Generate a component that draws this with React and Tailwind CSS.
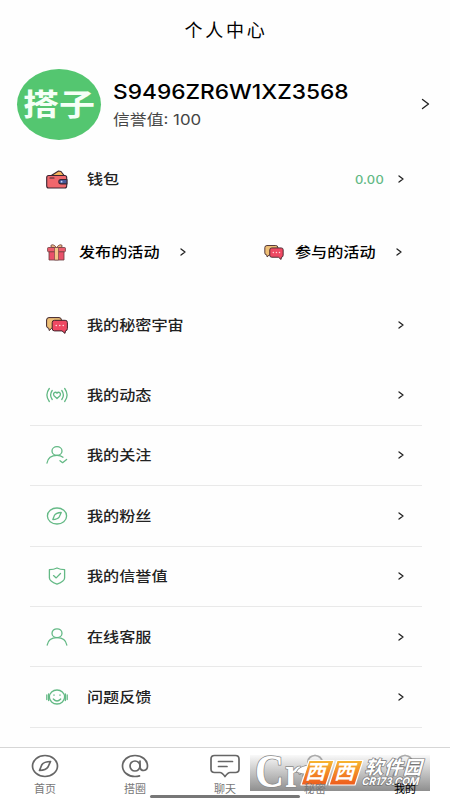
import { clsx } from "clsx";

const green = "#63b985";

function Chevron({ className, width = 1.3 }) {
  return (
    <svg className={className} viewBox="0 0 6 8" fill="none" stroke="#222" strokeWidth={width} strokeLinecap="round" strokeLinejoin="round">
      <path d="M1 1l4 3-4 3" />
    </svg>
  );
}

function WalletIcon() {
  return (
    <svg width="22" height="19" viewBox="0 0 22 19" stroke="#3b2430" strokeWidth="1.1" strokeLinejoin="round">
      <path d="M4.500 6L12.500 1l2.500.5 3.500 4.500z" fill="#f6b35c" />
      <rect x="0.700" y="5.500" width="20" height="12.500" rx="2" fill="#f0676c" />
      <path d="M4 8h4" strokeLinecap="round" />
      <path d="M21 9.500h-6a2.200 2.200 0 000 4.400h6z" fill="#475a9c" />
      <circle cx="15.600" cy="11.700" r="0.900" fill="#cdd7f4" stroke="none" />
    </svg>
  );
}

function GiftIcon() {
  return (
    <svg width="19" height="17" viewBox="0 0 19 17" stroke="#6b3a3c" strokeWidth="0.800" strokeLinejoin="round">
      <path d="M9.500 4C8 .5 4-.2 3.800 2c0 1.500 2.500 2 5.700 2zM9.500 4c1.500-3.500 5.500-4.200 5.700-2 0 1.500-2.500 2-5.700 2z" fill="#e8b884" />
      <path d="M2 7.500h15V16H2z" fill="#e9516a" />
      <rect x="0.600" y="3.500" width="17.800" height="4.300" rx="0.800" fill="#ee5d6e" />
      <path d="M7.500 3.500h4V16h-4z" fill="#f4c789" strokeWidth="0.600" />
    </svg>
  );
}

function ChatsIcon({ className }) {
  return (
    <svg className={className} viewBox="0 0 22 17" stroke="#3d2229" strokeWidth="1" strokeLinejoin="round">
      <path d="M3 .6h10q2.400 0 2.400 2.400v6q0 2.400-2.400 2.400H5.500L3.200 13.500l-.4-2.200Q.6 11 .6 9V3Q.6.600 3 .600z" fill="#eebf76" />
      <path d="M8.500 3.300h10.700q2.200 0 2.200 2.200v6q0 2.200-1.900 2.300l-.5 2.600-3-2.500H8.500q-2.300 0-2.300-2.300V5.600q0-2.300 2.300-2.300z" fill="#ee4963" />
      <path d="M10.200 8.500h.1M13.700 8.500h.1M17.200 8.500h.1" stroke="#ffd5d8" strokeWidth="1.600" strokeLinecap="round" />
    </svg>
  );
}

const shapes = {
  live: (
    <>
      <path d="M3.300 2.500q-4.800 6.500 0 13M6.200 4.500q-3.200 4.500 0 9M18.700 2.500q4.800 6.500 0 13M15.800 4.500q3.200 4.500 0 9" />
      <path d="M11 12.500L8 9.800Q6.800 7.200 8.800 6.300q1.500-.3 2.200.9.700-1.200 2.200-.9 2 .9.800 3.500z" />
    </>
  ),
  follow: (
    <>
      <ellipse cx="11" cy="5" rx="5" ry="4.300" />
      <path d="M1 17c.8-4.800 4.300-7.600 10-7.600 2.500 0 4.500.6 6 1.800M14 14.700l2.600 2 4-3.300" />
    </>
  ),
  compass: (
    <>
      <ellipse cx="11" cy="9" rx="9.600" ry="8" />
      <path d="M15.300 5.500q-5.500.3-6.800 2.800l-1.700 4.200q5-.3 6.500-2.700z" />
    </>
  ),
  shield: (
    <>
      <path d="M11 1c2.300 1.100 4.500 1.600 7.600 1.700v8.300c0 3-3.600 4.700-7.600 6.200-4-1.500-7.600-3.200-7.600-6.200V2.700C6.500 2.600 8.700 2.100 11 1z" />
      <path d="M7.500 8.600l2.700 2.300L14.500 6.500" />
    </>
  ),
  person: (
    <>
      <ellipse cx="11" cy="5.200" rx="5" ry="4.400" />
      <path d="M1.200 17C2 12.300 5.500 9.600 11 9.600s9 2.700 9.800 7.400" />
    </>
  ),
  robot: (
    <>
      <ellipse cx="11" cy="9" rx="7.600" ry="7" />
      <path d="M.8 7v4.500M21.200 7v4.500M2.600 6v6.500M19.400 6v6.500M7.300 11q3.700 4 7.400 0M8 6.800v.5M14 6.800v.5" />
    </>
  ),
};

function LineIcon({ name }) {
  return (
    <svg width="22" height="18" viewBox="0 0 22 18" fill="none" stroke={green} strokeWidth="1.300" strokeLinecap="round" strokeLinejoin="round">
      {shapes[name]}
    </svg>
  );
}

function Label({ children, className }) {
  return <span className={clsx("inline-block origin-left scale-x-[1.15] text-[14px] leading-5 whitespace-nowrap", className)}>{children}</span>;
}

function Row({ icon, label, value, className }) {
  return (
    <div className={clsx("flex items-center pr-[18.5px] pl-4", className)}>
      <div className="flex w-[22px] justify-center">{icon}</div>
      <Label className="ml-[18.5px] font-medium text-[#222]">{label}</Label>
      {value && <span className="mr-[14px] ml-auto origin-right scale-x-[1.12] pt-px text-[11.5px] leading-5 font-medium tracking-[0.2px] text-[#63b985]">{value}</span>}
      <Chevron className={clsx("h-[8px] w-[6px]", !value && "ml-auto")} />
    </div>
  );
}

const items = [
  { icon: "live", label: "我的动态" },
  { icon: "follow", label: "我的关注" },
  { icon: "compass", label: "我的粉丝" },
  { icon: "shield", label: "我的信誉值" },
  { icon: "person", label: "在线客服" },
  { icon: "robot", label: "问题反馈" },
];

const personIcon = (
  <>
    <ellipse cx="15" cy="7.500" rx="7" ry="6" />
    <path d="M3 22q2-8.500 12-8.500T27 22" />
  </>
);

const tabs = [
  {
    label: "首页",
    icon: (
      <>
        <ellipse cx="15" cy="12" rx="12.500" ry="10.500" />
        <path d="M20.500 7.500q-7 .2-8.800 3.500l-2.200 5.500q6.500-.3 8.500-3.500z" />
      </>
    ),
  },
  {
    label: "搭圈",
    icon: (
      <>
        <ellipse cx="15" cy="12" rx="5" ry="5" />
        <path d="M20 7v6.500q.5 3 3.800 3 3.700-.5 3.700-4.500C27.500 6 22 1.500 15 1.500S2.500 6 2.500 12 8 22.500 15 22.500q2.500 0 4.500-.6" />
      </>
    ),
  },
  {
    label: "聊天",
    icon: (
      <>
        <path d="M4.500 1.500h21q3.500 0 3.500 3.500v10q0 3.500-3.500 3.500H20q-2 0-5 4-3-4-5-4H4.500Q1 18.500 1 15V5q0-3.500 3.500-3.500z" />
        <path d="M8.500 7.500h14M8.500 12.500h8.500" />
      </>
    ),
  },
  { label: "秘密", icon: personIcon },
  { label: "我的", icon: personIcon, active: true },
];

function Watermark() {
  return (
    <div className="absolute top-[755px] left-[250px] h-[36px] w-[180px] bg-linear-to-b from-[#f4f4f4]/50 to-[#828282]/90">
      <svg className="overflow-visible" width="180" height="36" viewBox="0 0 180 36">
        <defs>
          <linearGradient id="orange" x1="0" y1="0" x2="0" y2="1">
            <stop offset="0" stopColor="#f7b733" />
            <stop offset="1" stopColor="#ee5a1c" />
          </linearGradient>
        </defs>
        <g fill="#fff" stroke="#8a8a8a" strokeWidth="1.600" paintOrder="stroke" fontFamily="Liberation Serif, serif" fontWeight="bold">
          <text x="5" y="31.500" fontSize="46" textLength="29" lengthAdjust="spacingAndGlyphs">C</text>
          <text x="35" y="31.500" fontSize="44" textLength="16" lengthAdjust="spacingAndGlyphs">r</text>
          <path d="M47 17q2-7 20-7-5 9-14 8.500z" />
        </g>
        <g fill="url(#orange)" stroke="#fff" strokeWidth="1.200" strokeLinejoin="round">
          <path d="M59 5.500h25L76 30H51z" />
          <path d="M87 5.500h26L105 30H79z" />
        </g>
        <g fill="#fff" fontFamily="Noto Sans CJK SC, sans-serif" fontWeight="bold" transform="skewX(-16)">
          <text x="62" y="24.500" fontSize="20">西</text>
          <text x="91" y="24.500" fontSize="20">西</text>
          <g stroke="#777" strokeWidth="1.400" paintOrder="stroke">
            <text x="120" y="19" fontSize="18.500" textLength="57">软件园</text>
            <text x="120" y="30.500" fontFamily="Inter, sans-serif" fontSize="10.500" textLength="57" lengthAdjust="spacingAndGlyphs">CR173.COM</text>
          </g>
        </g>
      </svg>
    </div>
  );
}

export default function App() {
  return (
    <div className="relative flex h-[801px] w-[450px] flex-col overflow-hidden bg-[#fefefe] font-['Inter','Noto_Sans_CJK_SC',sans-serif]">
      <header className="flex h-[61px] items-center justify-center pl-[2px] text-[18px] tracking-[2.800px] text-black">个人中心</header>

      <section className="flex h-[86px] items-center pr-[20px] pl-[17px]">
        <div className="flex h-[71px] w-[84px] items-center justify-center rounded-[50%] bg-[#54c670]">
          <span className="scale-x-[1.2] text-[30px] leading-none font-bold text-[#f4fff6]">搭子</span>
        </div>
        <div className="ml-[11.5px] pt-[3px]">
          <div className="origin-left scale-x-[1.108] text-[20.5px] leading-7 font-medium whitespace-nowrap text-black">S9496ZR6W1XZ3568</div>
          <div className="origin-left scale-x-[1.17] text-[14.4px] leading-7 whitespace-nowrap text-[#444]">信誉值: 100</div>
        </div>
        <Chevron className="ml-auto h-[12px] w-[9px]" width={0.9} />
      </section>

      <main className="flex-1 pr-[28px] pl-[30px]">
        <Row className="h-16" icon={<WalletIcon />} label="钱包" value="0.00" />
        <div className="flex h-[82px] items-center pr-[20px] pl-[17px] text-black">
          <GiftIcon />
          <Label className="ml-[13px] w-[81px] font-medium">发布的活动</Label>
          <Chevron className="ml-[20px] h-[8px] w-[6px]" />
          <ChatsIcon className="ml-auto h-[15px] w-[20px]" />
          <Label className="ml-[11px] w-[81px] font-medium">参与的活动</Label>
          <Chevron className="ml-[20px] h-[8px] w-[6px]" />
        </div>
        <Row className="h-16" icon={<ChatsIcon className="h-[17px] w-[22px]" />} label="我的秘密宇宙" />
        <div className="pt-[8.3px]">
          {items.map((item) => (
            <Row key={item.label} className="h-[60.45px] border-b border-[#e9e9e9]" icon={<LineIcon name={item.icon} />} label={item.label} />
          ))}
        </div>
      </main>

      <nav className="flex h-[54px] border-t border-[#d6d6d6] bg-white">
        {tabs.map((tab) => (
          <div key={tab.label} className={clsx("flex flex-1 flex-col items-center pt-[6px]", tab.active ? "text-black" : "text-[#777]")}>
            <svg width="30" height="24" viewBox="0 0 30 24" fill="none" stroke="#666" strokeWidth="1.700" strokeLinecap="round" strokeLinejoin="round">
              {tab.icon}
            </svg>
            <span className="relative z-10 mt-[4px] text-[11px] leading-[14px]">{tab.label}</span>
          </div>
        ))}
      </nav>

      <Watermark />
      <div className="absolute top-[795px] left-[150px] h-[3px] w-[150px] rounded-full bg-[#777]" />
    </div>
  );
}
